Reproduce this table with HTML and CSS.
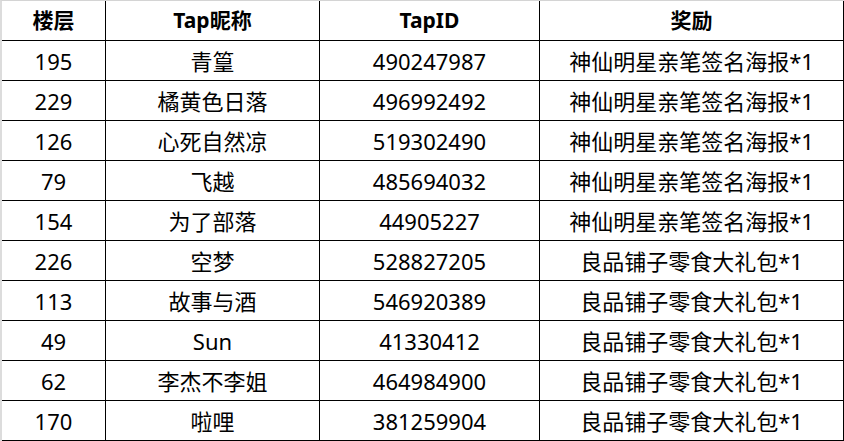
FILE: index.html
```html
<!DOCTYPE html>
<html lang="zh-CN">
<head>
<meta charset="utf-8">
<title>中奖名单</title>
<link rel="stylesheet" href="styles.css">
</head>
<body>
<table class="prize-table">
  <colgroup>
    <col class="col-floor">
    <col class="col-name">
    <col class="col-id">
    <col class="col-prize">
  </colgroup>
  <thead>
    <tr><th>楼层</th><th>Tap昵称</th><th>TapID</th><th>奖励</th></tr>
  </thead>
  <tbody>
    <tr><td>195</td><td>青篁</td><td>490247987</td><td>神仙明星亲笔签名海报*1</td></tr>
    <tr><td>229</td><td>橘黄色日落</td><td>496992492</td><td>神仙明星亲笔签名海报*1</td></tr>
    <tr><td>126</td><td>心死自然凉</td><td>519302490</td><td>神仙明星亲笔签名海报*1</td></tr>
    <tr><td>79</td><td>飞越</td><td>485694032</td><td>神仙明星亲笔签名海报*1</td></tr>
    <tr><td>154</td><td>为了部落</td><td>44905227</td><td>神仙明星亲笔签名海报*1</td></tr>
    <tr><td>226</td><td>空梦</td><td>528827205</td><td>良品铺子零食大礼包*1</td></tr>
    <tr><td>113</td><td>故事与酒</td><td>546920389</td><td>良品铺子零食大礼包*1</td></tr>
    <tr><td>49</td><td>Sun</td><td>41330412</td><td>良品铺子零食大礼包*1</td></tr>
    <tr><td>62</td><td>李杰不李姐</td><td>464984900</td><td>良品铺子零食大礼包*1</td></tr>
    <tr><td>170</td><td>啦哩</td><td>381259904</td><td>良品铺子零食大礼包*1</td></tr>
  </tbody>
</table>
</body>
</html>
```
FILE: styles.css
```css
html, body {
  margin: 0;
  padding: 0;
  background: #ffffff;
}

.prize-table {
  border-collapse: separate;
  border-spacing: 0;
  table-layout: fixed;
  width: 844px;
  border-top: 1px solid #d4d4d4;
  border-left: 2px solid #dcdcdc;
  font-family: "Noto Sans", "Noto Sans CJK SC", sans-serif;
  font-size: 22px;
  color: #000000;
}

.col-floor { width: 104px; }
.col-name { width: 214px; }
.col-id { width: 220px; }
.col-prize { width: 304px; }

.prize-table th,
.prize-table td {
  height: 39px;
  padding: 0;
  text-align: center;
  vertical-align: middle;
  border-right: 1px solid #000000;
  border-bottom: 1px solid #000000;
  line-height: 1;
  white-space: nowrap;
  box-sizing: content-box;
}

.prize-table td {
  padding-top: 1px;
  height: 38px;
}

.prize-table th {
  font-size: 21px;
  font-weight: 700;
}
```
